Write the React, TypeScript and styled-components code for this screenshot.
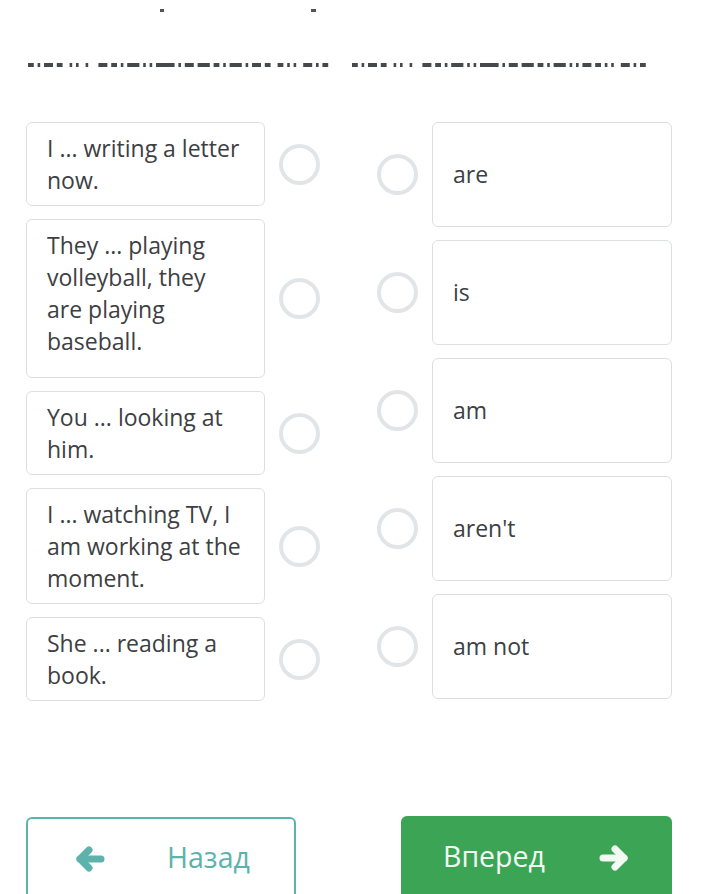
import React from "react";
import styled, { createGlobalStyle } from "styled-components";

const Global = createGlobalStyle`
  html, body { margin: 0; padding: 0; background: #ffffff; }
  body { font-family: "Open Sans", "Noto Sans", "Liberation Sans", sans-serif; overflow: hidden; }
  * { box-sizing: border-box; }
`;

const Page = styled.div`
  width: 709px;
  height: 894px;
  overflow: hidden;
  padding: 0 37px 0 26px;
`;

const TopMarks = styled.svg`
  display: block;
  margin-left: -26px;
`;

const DashRow = styled.svg`
  display: block;
  margin-top: 43px;
  margin-left: 2px;
`;

const MatchGrid = styled.div`
  display: grid;
  grid-template-columns: 294px 295px;
  column-gap: 57px;
  margin-top: 55px;
`;

const Column = styled.div`
  display: flex;
  flex-direction: column;
  gap: 13px;
`;

const Row = styled.div`
  display: flex;
  align-items: center;
  gap: 14px;
`;

const Card = styled.div<{ $minH?: number }>`
  width: 240px;
  min-height: ${(p) => (p.$minH ? `${p.$minH}px` : "auto")};
  border: 1px solid #dcdfe2;
  border-radius: 6px;
  padding: 9px 20px 9px 20px;
  font-size: 23px;
  line-height: 32px;
  color: #3d4043;
  background: #fff;
`;

const AnswerCard = styled(Card)`
  height: 105px;
  display: flex;
  align-items: center;
  padding: 0 20px 2px 20px;
`;

const Radio = styled.div`
  width: 41px;
  height: 41px;
  flex: none;
  border-radius: 50%;
  border: 4px solid #e2e5e7;
`;

const Footer = styled.div`
  display: flex;
  justify-content: space-between;
  margin-top: 115px;
`;

const NavButton = styled.button<{ $primary?: boolean }>`
  width: 271px;
  height: 84px;
  border-radius: 6px;
  display: flex;
  align-items: center;
  font-family: "Open Sans", "Noto Sans", sans-serif;
  font-size: 28.5px;
  padding: 0;
  cursor: pointer;
  border: 2px solid ${(p) => (p.$primary ? "#3ca555" : "#5db3ac")};
  background: ${(p) => (p.$primary ? "#3ca555" : "#ffffff")};
  color: ${(p) => (p.$primary ? "#f2fbf3" : "#5db3ac")};
`;

const BackButton = styled(NavButton)`
  padding-left: 47px;
  gap: 62px;
  margin-top: 1px;
  width: 270px;
`;

const NextButton = styled(NavButton)`
  padding-left: 40px;
  gap: 54px;
`;

const Label = styled.span`
  line-height: 1;
  margin-top: -3px;
`;

const seg1 = "##.#.###.##..#.#..#...###.##.#.####.#.#.######.#.###.####.##.#.####.#.###.##..##.#.#..###.#.##";
const seg2 = "##.#.###.##..#.#..#...###.##.#.####.#.#.######.#.###.####.##.#.####.#.#.###.##.#.#..###.#.##";

function Dashes({ pattern, x0 }: { pattern: string; x0: number }) {
  const rects: React.ReactNode[] = [];
  let i = 0;
  while (i < pattern.length) {
    if (pattern[i] === "#") {
      let j = i;
      while (j < pattern.length && pattern[j] === "#") j++;
      rects.push(<rect key={i} x={x0 + i * 3.2} y={0} width={(j - i) * 3.2 - 0.6} height={4} fill="#46494c" />);
      i = j;
    } else i++;
  }
  return <>{rects}</>;
}

function Arrow({ dir }: { dir: "left" | "right" }) {
  return (
    <svg width="30" height="26" viewBox="0 0 30 26" style={{ flex: "none", transform: dir === "right" ? "scaleX(-1)" : undefined }}>
      <g fill="none" stroke="currentColor" strokeWidth="7" strokeLinecap="round" strokeLinejoin="round">
        <path d="M5 13 H26" />
        <path d="M14 4 L5 13 L14 22" />
      </g>
    </svg>
  );
}

const left = [
  { t: "I ... writing a letter now." },
  { t: "They ... playing volleyball, they are playing baseball.", h: 159 },
  { t: "You ... looking at him." },
  { t: "I ... watching TV, I am working at the moment." },
  { t: "She ... reading a book." },
];

const right = ["are", "is", "am", "aren't", "am not"];

export default function App() {
  return (
    <>
      <Global />
      <Page>
        <TopMarks width="709" height="20" viewBox="0 0 709 20">
          <rect x="160" y="9" width="4" height="3" fill="#555" />
          <rect x="311" y="9" width="5" height="3" fill="#555" />
        </TopMarks>
        <DashRow width="650" height="4" viewBox="0 0 650 4">
          <Dashes pattern={seg1} x0={0} />
          <Dashes pattern={seg2} x0={324} />
        </DashRow>
        <MatchGrid>
          <Column>
            {left.map((l, i) => (
              <Row key={i}>
                <Card $minH={l.h}>{l.t}</Card>
                <Radio />
              </Row>
            ))}
          </Column>
          <Column>
            {right.map((r, i) => (
              <Row key={i}>
                <Radio />
                <AnswerCard>{r}</AnswerCard>
              </Row>
            ))}
          </Column>
        </MatchGrid>
        <Footer>
          <BackButton>
            <Arrow dir="left" />
            <Label>Назад</Label>
          </BackButton>
          <NextButton $primary>
            <Label>Вперед</Label>
            <Arrow dir="right" />
          </NextButton>
        </Footer>
      </Page>
    </>
  );
}
